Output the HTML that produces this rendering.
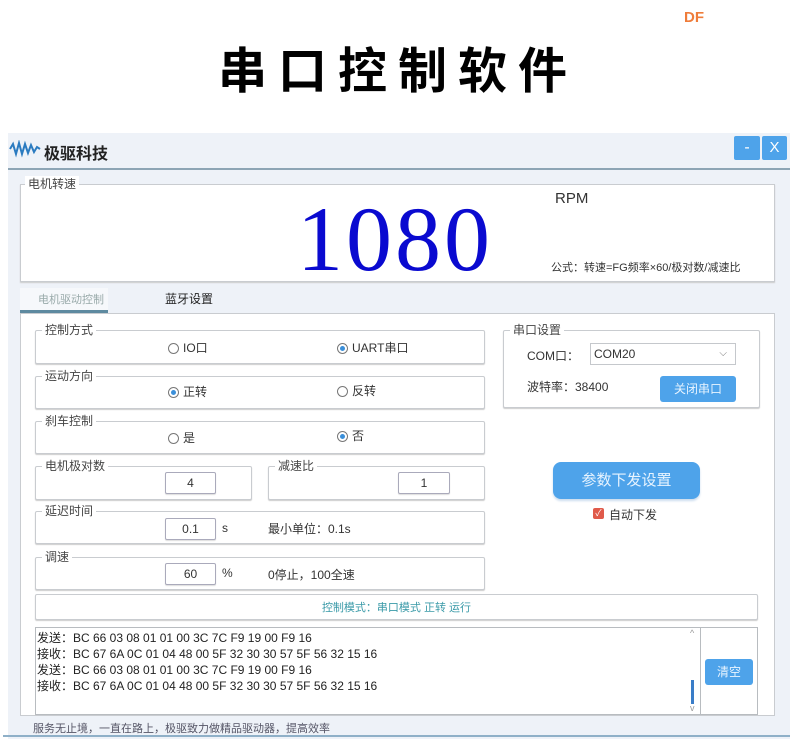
<!DOCTYPE html>
<html><head><meta charset="utf-8">
<style>
*{margin:0;padding:0;box-sizing:border-box}
body{width:793px;height:755px;background:#fff;position:relative;overflow:hidden;font-family:"Liberation Sans","Noto Sans CJK SC",sans-serif;color:#333;font-size:12px}
.a{position:absolute}
.grp{position:absolute;border:1px solid #c9ccd0;border-radius:2px;box-shadow:0 1px 1px #ccc;background:#fff}
.gl{position:absolute;top:-9px;left:6px;background:#fff;padding:0 3px;font-size:12px;color:#444;line-height:16px}
.rad{position:absolute;font-size:12px;line-height:14px;color:#333}
.rad i{display:inline-block;width:11px;height:11px;border:1px solid #777;border-radius:50%;vertical-align:-2px;margin-right:4px;position:relative;background:#fff}
.rad i.on::after{content:"";position:absolute;left:2px;top:2px;width:5px;height:5px;border-radius:50%;background:#3b8fd9}
.inp{position:absolute;border:1px solid #aab;border-radius:2px;background:#fff;text-align:center;font-size:12px;line-height:20px;box-shadow:0 1px 1px #ddd}
.btn{position:absolute;background:#4ea3ea;color:#e8f4ff;text-align:center;border-radius:3px}
</style></head><body>
<div class="a" style="left:684px;top:9px;color:#ef7c3a;font-weight:bold;font-size:15px">DF</div>
<div class="a" style="left:218px;top:38px;font-size:49px;font-weight:bold;letter-spacing:11px;color:#000;font-family:'Noto Sans CJK SC',sans-serif;line-height:60px">串口控制软件</div>

<div class="a" style="left:8px;top:133px;width:782px;height:606px;background:#eef2f8"></div>
<div class="a" style="left:8px;top:168px;width:782px;height:2px;background:#8da5b5"></div>
<svg class="a" style="left:9px;top:140px" width="32" height="18" viewBox="0 0 32 18"><path d="M1 9 L4 4 L7 14 L10 3 L13 14 L16 4 L19 13 L22 5 L25 12 L28 7 L31 9" fill="none" stroke="#2b7bc0" stroke-width="2"/></svg>
<div class="a" style="left:44px;top:140px;font-size:16px;font-weight:bold;color:#222">极驱科技</div>
<div class="btn" style="left:734px;top:136px;width:26px;height:24px;line-height:24px;font-size:16px;color:#fff;border-radius:2px">-</div>
<div class="btn" style="left:762px;top:136px;width:25px;height:24px;line-height:24px;font-size:15px;color:#fff;border-radius:2px">X</div>

<div class="grp" style="left:20px;top:184px;width:755px;height:98px;border-radius:0"><div class="gl" style="left:4px;background:#fff">电机转速</div></div>
<div class="a" style="left:297px;top:189px;font-family:'Liberation Serif',serif;font-size:92px;color:#0a0ad0;line-height:100px;letter-spacing:3px">1080</div>
<div class="a" style="left:555px;top:190px;font-size:15px;color:#333">RPM</div>
<div class="a" style="left:551px;top:259px;font-size:11px;color:#333">公式：转速=FG频率×60/极对数/减速比</div>

<div class="a" style="left:20px;top:288px;width:88px;height:25px;background:#f6f8fb;border-bottom:3px solid #5e8aa0"></div>
<div class="a" style="left:38px;top:291px;font-size:11px;color:#9aa">电机驱动控制</div>
<div class="a" style="left:165px;top:290px;font-size:12px;color:#222">蓝牙设置</div>
<div class="a" style="left:20px;top:313px;width:755px;height:403px;background:#fff;border:1px solid #c9ccd0"></div>

<div class="grp" style="left:35px;top:330px;width:450px;height:34px"><div class="gl">控制方式</div></div>
<div class="rad" style="left:168px;top:341px"><i></i>IO口</div>
<div class="rad" style="left:337px;top:341px"><i class="on"></i>UART串口</div>
<div class="grp" style="left:35px;top:376px;width:450px;height:33px"><div class="gl">运动方向</div></div>
<div class="rad" style="left:168px;top:385px"><i class="on"></i>正转</div>
<div class="rad" style="left:337px;top:384px"><i></i>反转</div>
<div class="grp" style="left:35px;top:421px;width:450px;height:33px"><div class="gl">刹车控制</div></div>
<div class="rad" style="left:168px;top:431px"><i></i>是</div>
<div class="rad" style="left:337px;top:429px"><i class="on"></i>否</div>
<div class="grp" style="left:35px;top:466px;width:217px;height:34px"><div class="gl">电机极对数</div></div>
<div class="inp" style="left:165px;top:472px;width:51px;height:22px">4</div>
<div class="grp" style="left:268px;top:466px;width:217px;height:34px"><div class="gl">减速比</div></div>
<div class="inp" style="left:398px;top:472px;width:52px;height:22px">1</div>
<div class="grp" style="left:35px;top:511px;width:450px;height:33px"><div class="gl">延迟时间</div></div>
<div class="inp" style="left:165px;top:518px;width:51px;height:22px">0.1</div>
<div class="a" style="left:222px;top:521px">s</div>
<div class="a" style="left:268px;top:520px">最小单位：0.1s</div>
<div class="grp" style="left:35px;top:557px;width:450px;height:33px"><div class="gl">调速</div></div>
<div class="inp" style="left:165px;top:563px;width:51px;height:22px">60</div>
<div class="a" style="left:222px;top:566px">%</div>
<div class="a" style="left:268px;top:566px">0停止，100全速</div>

<div class="grp" style="left:503px;top:330px;width:257px;height:78px"><div class="gl">串口设置</div></div>
<div class="a" style="left:527px;top:347px;font-size:12px">COM口：</div>
<div class="a" style="left:590px;top:343px;width:146px;height:22px;border:1px solid #c5c8cc;background:#fff;font-size:12px;line-height:20px;padding-left:3px">COM20<span style="position:absolute;right:8px;top:0;font-size:10px;color:#777">⌵</span></div>
<div class="a" style="left:527px;top:378px;font-size:12px">波特率：38400</div>
<div class="btn" style="left:660px;top:376px;width:76px;height:26px;line-height:26px;font-size:12px">关闭串口</div>

<div class="btn" style="left:553px;top:462px;width:147px;height:37px;line-height:37px;font-size:15px;border-radius:8px;box-shadow:0 2px 2px #cde">参数下发设置</div>
<div class="a" style="left:593px;top:508px;width:11px;height:11px;background:#e05a4a;border-radius:2px;color:#fff;font-size:9px;line-height:11px;text-align:center">✓</div>
<div class="a" style="left:609px;top:506px;font-size:12px">自动下发</div>

<div class="grp" style="left:35px;top:594px;width:723px;height:26px"></div>
<div class="a" style="left:35px;top:599px;width:723px;text-align:center;font-size:11px;color:#3a9aa8">控制模式：串口模式 正转 运行</div>

<div class="a" style="left:35px;top:627px;width:723px;height:88px;border:1px solid #b8bcc0;background:#fff"></div>
<div class="a" style="left:700px;top:627px;width:1px;height:88px;background:#b8bcc0"></div>
<div class="a" style="left:37px;top:630px;font-size:12px;line-height:16px;color:#222">发送：BC 66 03 08 01 01 00 3C 7C F9 19 00 F9 16<br>接收：BC 67 6A 0C 01 04 48 00 5F 32 30 30 57 5F 56 32 15 16<br>发送：BC 66 03 08 01 01 00 3C 7C F9 19 00 F9 16<br>接收：BC 67 6A 0C 01 04 48 00 5F 32 30 30 57 5F 56 32 15 16</div>
<div class="a" style="left:690px;top:628px;font-size:9px;color:#999">^</div>
<div class="a" style="left:691px;top:680px;width:3px;height:24px;background:#3a7dc8"></div>
<div class="a" style="left:690px;top:703px;font-size:9px;color:#999">v</div>
<div class="btn" style="left:705px;top:659px;width:48px;height:26px;line-height:26px;font-size:12px">清空</div>

<div class="a" style="left:33px;top:720px;font-size:11px;color:#556">服务无止境，一直在路上，极驱致力做精品驱动器，提高效率</div>
<div class="a" style="left:3px;top:735px;width:787px;height:2px;background:#8fb0c8"></div>
</body></html>
